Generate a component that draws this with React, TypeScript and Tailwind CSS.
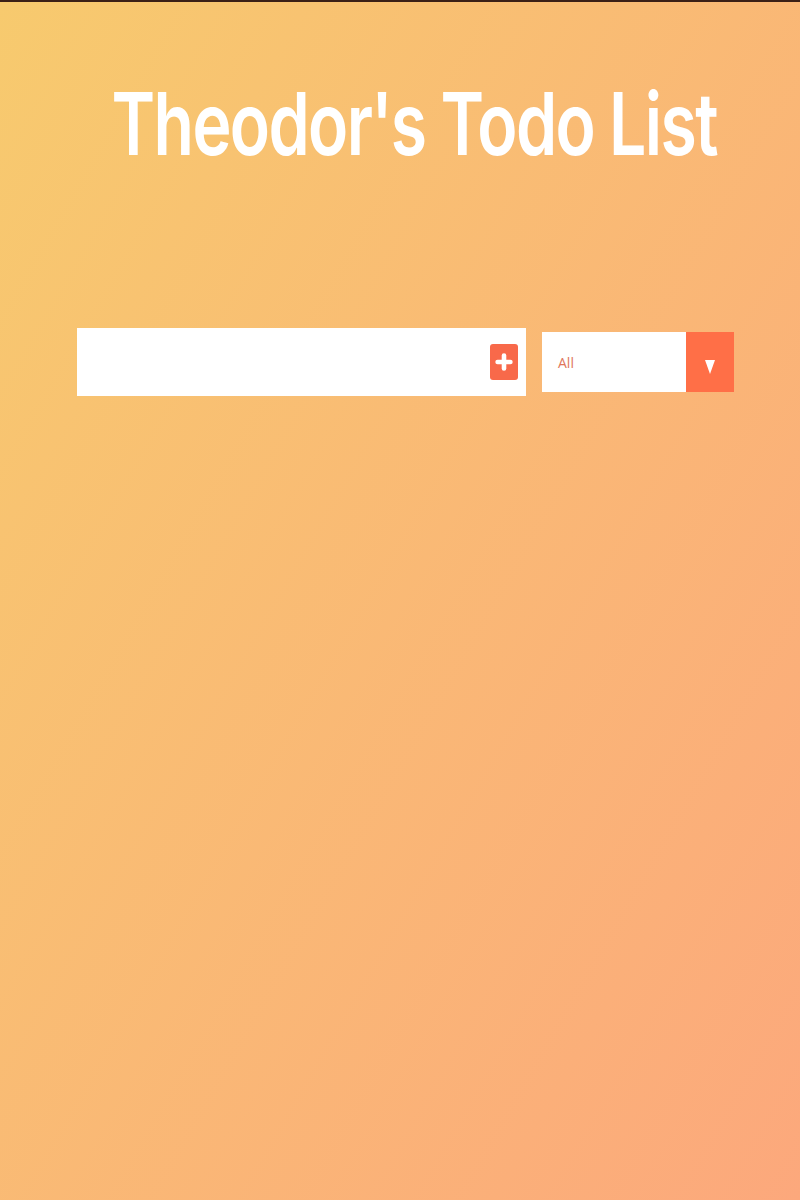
import { Plus } from "lucide-react";

const App = () => {
  return (
    <div className="min-h-[1200px] w-full border-t-2 border-[#3b2016] bg-[linear-gradient(120deg,#f7ca6e_0%,#fca87c_100%)] font-['Inter',sans-serif]">
      <header className="flex justify-center pt-[78px] pl-[28px]">
        <h1 className="origin-center scale-x-[0.76] whitespace-nowrap text-[87px] font-semibold leading-none tracking-tight text-white">
          Theodor's Todo List
        </h1>
      </header>

      <form className="mt-[161px] flex items-center pl-[77px]">
        <div className="flex h-[68px] w-[449px] items-center justify-end bg-white pr-[8px]">
          <button
            type="button"
            className="flex h-[36px] w-[28px] items-center justify-center rounded-[3px] bg-[#f8694a]"
          >
            <Plus className="h-[26px] w-[22px] text-white" strokeWidth={5} />
          </button>
        </div>

        <div className="ml-[16px] flex h-[60px] w-[192px]">
          <div className="flex flex-1 items-center bg-white pl-[16px] font-['Open_Sans',sans-serif] text-[14px] text-[#e0765a]">
            All
          </div>
          <div className="flex w-[48px] items-center justify-center bg-[#ff6f47]">
            <svg width="10" height="14" viewBox="0 0 10 14" className="mt-[10px]">
              <polygon points="0,0 10,0 5,14" fill="white" />
            </svg>
          </div>
        </div>
      </form>
    </div>
  );
};

export default App;
